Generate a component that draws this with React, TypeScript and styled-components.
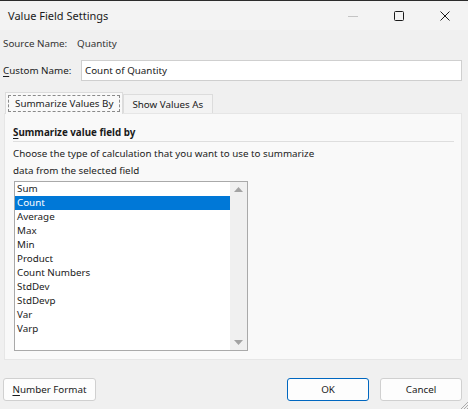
import React from "react";
import styled, { createGlobalStyle } from "styled-components";

const Global = createGlobalStyle`
  html, body { margin: 0; padding: 0; background: #f0f0f0; }
  body { font-family: "Noto Sans", sans-serif; font-size: 9.8px; color: #1a1a1a; }
  * { box-sizing: border-box; }
`;

const Window = styled.div`
  position: relative;
  width: 468px;
  height: 409px;
  background: #f0f0f0;
  display: flex;
  flex-direction: column;
  overflow: hidden;
  border-top: 1px solid #2b2b2b;
`;

const TitleBar = styled.div`
  height: 29px;
  display: flex;
  align-items: center;
  background: #f3f3f3;
  border-top-right-radius: 7px;
`;

const Title = styled.div`
  flex: 1;
  padding-left: 8px;
  font-size: 11px;
  color: #1b1b1b;
`;

const Ctrl = styled.div`
  width: 46px;
  height: 29px;
  display: flex;
  align-items: center;
  justify-content: center;
`;

const Body = styled.div`
  flex: 1;
  display: flex;
  flex-direction: column;
  padding: 0 6px 0 3px;
`;

const SourceRow = styled.div`
  margin-top: 6px;
  height: 16px;
  line-height: 16px;
  display: flex;
  align-items: center;
  color: #333;
`;

const SourceLabel = styled.span`
  width: 74px;
  flex: none;
`;

const CustomRow = styled.div`
  margin-top: 8px;
  height: 21px;
  display: flex;
  align-items: center;
`;

const CustomLabel = styled.span`
  width: 78px;
  flex: none;
`;

const Input = styled.div`
  flex: 1;
  height: 21px;
  background: #fff;
  border: 1px solid #cfcfcf;
  display: flex;
  align-items: center;
  padding-left: 3px;
`;

const U = styled.span`
  text-decoration: underline;
  text-underline-offset: 2px;
`;

const TabRow = styled.div`
  margin-top: 10px;
  height: 22px;
  display: flex;
  align-items: flex-end;
  padding-left: 2px;
`;

const Tab = styled.div<{ $active?: boolean }>`
  height: ${(p) => (p.$active ? 22 : 19)}px;
  padding: ${(p) => (p.$active ? "2px" : "0 9px 0 8px")};
  background: ${(p) => (p.$active ? "#f9f9f9" : "#f3f3f3")};
  border: 1px solid #dcdcdc;
  border-bottom: none;
  display: flex;
  align-items: center;
  margin-bottom: ${(p) => (p.$active ? -1 : 0)}px;
  position: relative;
  z-index: ${(p) => (p.$active ? 1 : 0)};
`;

const Focus = styled.div`
  height: 100%;
  padding: 0 6px;
  border: 1px dashed #8a8a8a;
  display: flex;
  align-items: center;
`;

const Panel = styled.div`
  margin-left: 1px;
  height: 247px;
  background: #f9f9f9;
  border: 1px solid #e6e6e6;
  padding: 0 7px 0 8px;
  display: flex;
  flex-direction: column;
`;

const Heading = styled.div`
  margin-top: 11px;
  font-weight: 700;
  height: 17px;
  line-height: 16px;
  border-bottom: 1px solid #dedede;
`;

const Desc = styled.div`
  margin-top: 3px;
  line-height: 17px;
  color: #222;
`;

const ListBox = styled.div`
  margin-top: 2px;
  margin-left: 1px;
  width: 234px;
  height: 170px;
  background: #fff;
  border: 1px solid #a9a9a9;
  display: flex;
`;

const Items = styled.div`
  flex: 1;
`;

const Item = styled.div<{ $sel?: boolean }>`
  height: 14px;
  line-height: 14px;
  padding-left: 2px;
  background: ${(p) => (p.$sel ? "#0078d7" : "transparent")};
  color: ${(p) => (p.$sel ? "#fff" : "#1a1a1a")};
`;

const ScrollBar = styled.div`
  width: 17px;
  background: #f0f0f0;
  display: flex;
  flex-direction: column;
  justify-content: space-between;
  align-items: center;
  padding: 5px 0 5px;
`;

const Footer = styled.div`
  margin-top: 18px;
  display: flex;
  align-items: center;
`;

const Button = styled.div<{ $primary?: boolean }>`
  height: 23px;
  width: 82px;
  background: #fdfdfd;
  border: 1px solid ${(p) => (p.$primary ? "#0067c0" : "#d0d0d0")};
  border-radius: 3px;
  display: flex;
  align-items: center;
  justify-content: center;
  color: #1a1a1a;
`;

const WideButton = styled(Button)`
  width: 93px;
`;

const Spacer = styled.div`
  flex: 1;
`;

const Gap = styled.div`
  width: 11px;
`;

const Grip = styled.svg`
  position: absolute;
  right: 0;
  bottom: 0;
`;

const items = [
  "Sum",
  "Count",
  "Average",
  "Max",
  "Min",
  "Product",
  "Count Numbers",
  "StdDev",
  "StdDevp",
  "Var",
  "Varp",
];

export default function App() {
  return (
    <>
      <Global />
      <Window>
        <TitleBar>
          <Title>Value Field Settings</Title>
          <Ctrl>
            <svg width="12" height="12" viewBox="0 0 12 12">
              <path d="M1 6.5h10" stroke="#c4c4c4" strokeWidth="1" />
            </svg>
          </Ctrl>
          <Ctrl>
            <svg width="12" height="12" viewBox="0 0 12 12">
              <rect x="1.5" y="1.5" width="9" height="9" rx="1" fill="none" stroke="#1a1a1a" strokeWidth="1" />
            </svg>
          </Ctrl>
          <Ctrl>
            <svg width="12" height="12" viewBox="0 0 12 12">
              <path d="M1.5 1.5l9 9M10.5 1.5l-9 9" stroke="#1a1a1a" strokeWidth="1" />
            </svg>
          </Ctrl>
        </TitleBar>
        <Body>
          <SourceRow>
            <SourceLabel>Source Name:</SourceLabel>
            <span>Quantity</span>
          </SourceRow>
          <CustomRow>
            <CustomLabel>
              <U>C</U>ustom Name:
            </CustomLabel>
            <Input>Count of Quantity</Input>
          </CustomRow>
          <TabRow>
            <Tab $active>
              <Focus>Summarize Values By</Focus>
            </Tab>
            <Tab>Show Values As</Tab>
          </TabRow>
          <Panel>
            <Heading>
              <U>S</U>ummarize value field by
            </Heading>
            <Desc>
              Choose the type of calculation that you want to use to summarize
              <br />
              data from the selected field
            </Desc>
            <ListBox>
              <Items>
                {items.map((it) => (
                  <Item key={it} $sel={it === "Count"}>
                    {it}
                  </Item>
                ))}
              </Items>
              <ScrollBar>
                <svg width="9" height="5" viewBox="0 0 9 5">
                  <path d="M0 5L4.5 0L9 5Z" fill="#a3a3a3" />
                </svg>
                <svg width="9" height="5" viewBox="0 0 9 5">
                  <path d="M0 0L4.5 5L9 0Z" fill="#a3a3a3" />
                </svg>
              </ScrollBar>
            </ListBox>
          </Panel>
          <Footer>
            <WideButton>
              <span>
                <U>N</U>umber Format
              </span>
            </WideButton>
            <Spacer />
            <Button $primary>OK</Button>
            <Gap />
            <Button>Cancel</Button>
          </Footer>
        </Body>
        <Grip width="8" height="8" viewBox="0 0 8 8">
          <path d="M8 1L1 8M8 4L4 8M8 7L7 8" stroke="#9a9a9a" strokeWidth="0.8" />
        </Grip>
      </Window>
    </>
  );
}
